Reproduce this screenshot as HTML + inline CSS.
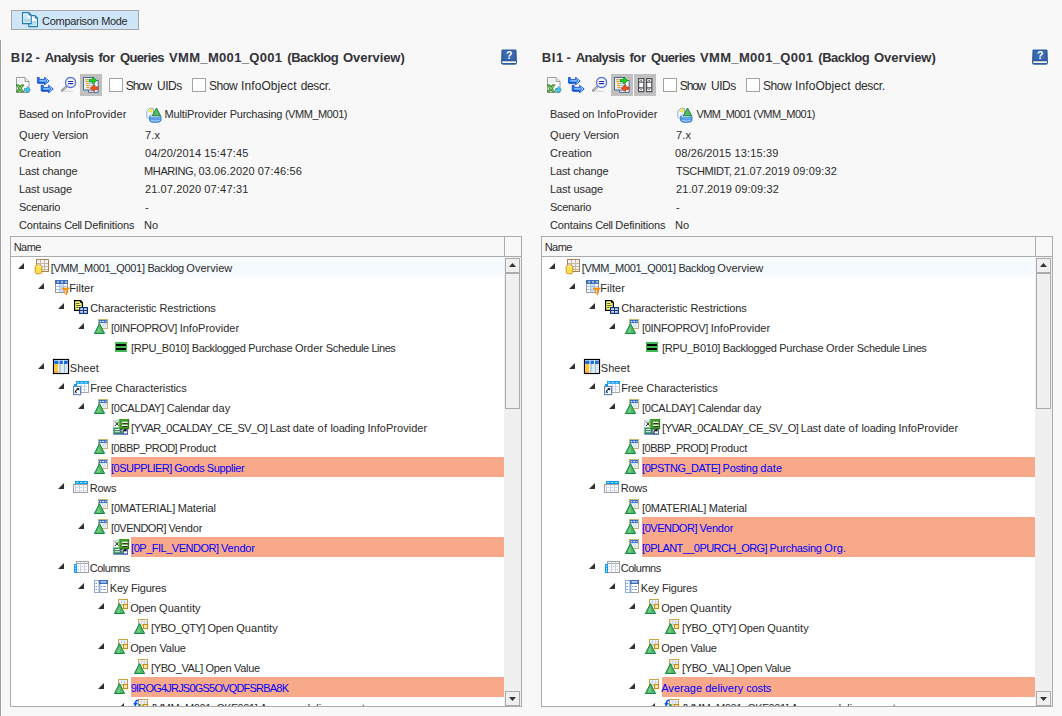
<!DOCTYPE html>
<html><head><meta charset="utf-8"><title>Comparison Mode</title>
<style>
*{box-sizing:border-box;margin:0;padding:0}
html,body{width:1062px;height:716px;overflow:hidden;background:#f8f8f8}
body{position:relative;font-family:"Liberation Sans",sans-serif;font-size:11px;color:#2b2b2b;letter-spacing:-0.27px}
.edge{position:absolute;left:0;top:40px;width:1px;height:676px;background:#a0a0a0;box-shadow:1px 0 0 #fbfbfb}
.cmp{position:absolute;left:11px;top:10px;width:128px;height:20px;background:#cfe6f8;border:1px solid #a6a6a6}
.cmp svg{position:absolute;left:10px;top:1px;width:16px;height:16px}
.cmt{position:absolute;left:31px;top:1px;line-height:19px;white-space:nowrap}
.panel{position:absolute;top:0;width:531px;height:716px}
.title{position:absolute;left:0;top:48px;width:520px;height:20px;font-size:13px;font-weight:700;line-height:20px;white-space:nowrap;color:#333338}
.tw{position:absolute;top:0}
.help{position:absolute;left:501px;top:49px;width:16px;height:16px}
.tic{display:block;width:100%;height:100%}
.tb{position:absolute;top:77px;width:16px;height:16px}
.pbtn{position:absolute;top:74px;width:22px;height:22px;background:#c0c0c0;padding:3px}
.cb{position:absolute;top:78px;width:14px;height:14px;border:1px solid #a3a3a3;background:#fff}
.cbt{position:absolute;top:77px;width:230px;height:18px;font-size:12px;line-height:18px;white-space:nowrap}
.cw{position:absolute;top:0}
.lb,.vl{position:absolute;line-height:14px;white-space:nowrap}
.lb{left:19px}
.vl{left:145px}
.prov{position:absolute;left:146px;top:107px;width:16px;height:16px}
.tree{position:absolute;left:10px;top:236px;width:512px;height:471px;border:1px solid #ababab;background:#fff;overflow:hidden}
.hdr{position:absolute;left:0;top:0;width:510px;height:20px;background:#f8f8f8;border-bottom:1px solid #ababab}
.hn{position:absolute;left:4px;top:0;line-height:20px}
.hsep{position:absolute;left:493px;top:0;width:1px;height:19px;background:#ababab}
.body{position:absolute;left:0;top:20px;width:493px;height:450px;overflow:hidden}
.row{position:absolute;left:0;width:493px;height:20px}
.ar{position:absolute;top:6px;width:0;height:0;border-left:6px solid transparent;border-bottom:6px solid #303030}
.icw{position:absolute;top:2px;width:16px;height:16px}
.ic{display:block;width:16px;height:16px;overflow:visible}
.tx{position:absolute;top:0;right:0;height:20px;line-height:23px;padding-left:1px;white-space:nowrap}
.hl .tx{background:#f8a98a;color:#0000ff}
.foc .tx{background:linear-gradient(#fafdff,#f5fafe 30%,#f5fafe 70%,#fafdff)}
.sb{position:absolute;left:493px;top:20px;width:17px;height:450px;background:#f0f0f0}
.sbu,.sbd,.sbt{position:absolute;left:1px;width:15px;background:#f0f0f0;border:1px solid #ababab}
.sbu{top:1px;height:15px}
.sbd{bottom:1px;height:15px}
.sbt{top:16px;height:136px}
.sbu svg{position:absolute;left:3px;top:4px;width:7px;height:4px}
.sbd svg{position:absolute;left:3px;top:5px;width:7px;height:4px}
</style></head>
<body>
<div class="edge"></div>
<div class="cmp"><svg  viewBox="0 0 16 16"><path d="M6.8 3.6H13L15.4 6V14.6H6.8Z" fill="#fff" stroke="#1d7bb8" stroke-width="1.2" stroke-linejoin="round"/><rect x="8" y="9" width="6" height="4.6" fill="#b6dcea"/><path d="M12.6 4.6L14.6 6.6" stroke="#1d6fa8" stroke-width="1.2"/><path d="M0.6 0.6H6.8L9.2 3V11.6H0.6Z" fill="#fff" stroke="#1d7bb8" stroke-width="1.2" stroke-linejoin="round"/><rect x="1.8" y="2" width="4.2" height="4.6" fill="#cfe8f1"/><rect x="1.8" y="6.6" width="6.2" height="3.8" fill="#b0d9e8"/><path d="M6.4 1.6L8.4 3.6" stroke="#1d6fa8" stroke-width="1.2"/></svg><span class="cmt" id="t0" style="text-indent:-0.90px;"><span style="letter-spacing:-0.305px">Comparison </span><span style="letter-spacing:-0.379px">Mode</span></span></div>
<div class="panel" style="left:0px">
<div class="title"><span class="tw" style="left:10.78px;letter-spacing:0.755px">BI2</span> <span class="tw" style="left:35.49px;letter-spacing:0.000px">-</span> <span class="tw" style="left:44.78px;letter-spacing:-0.602px">Analysis</span> <span class="tw" style="left:98.38px;letter-spacing:-0.355px">for</span> <span class="tw" style="left:119.97px;letter-spacing:-0.641px">Queries</span> <span class="tw" style="left:169.11px;letter-spacing:0.312px">VMM_M001_Q001</span> <span class="tw" style="left:287.35px;letter-spacing:-0.512px">(Backlog</span> <span class="tw" style="left:343.07px;letter-spacing:-0.058px">Overview)</span></div>
<span class="help"><svg class="tic" viewBox="0 0 16 16"><path d="M1.6 0.4H14.4Q15.4 0.4 15.5 1.4L16 13.4Q16 15.8 13.8 15.8H2.2Q0 15.8 0 13.4L0.5 1.4Q0.6 0.4 1.6 0.4Z" fill="#2d5ba3"/><path d="M2.2 1.6H13.8V10.6H2.2Z" fill="#3a69ad"/><rect x="1.2" y="12.3" width="13.8" height="1.7" fill="#fbf6e6"/><text x="8" y="10.3" font-family="Liberation Sans, sans-serif" font-weight="700" font-size="10.5" fill="#fff" text-anchor="middle">?</text></svg></span>
<span class="tb" style="left:15px"><svg class="tic" viewBox="0 0 16 16"><g transform="translate(0.5,0)"><path d="M1 0.5H9.5L13.5 4.5V15.5H1Z" fill="#fdfdfd" stroke="#9a9a9a"/><path d="M9.5 0.5V4.5H13.5" fill="#ececec" stroke="#9a9a9a"/><rect x="2.5" y="2" width="5" height="4" fill="#ededed"/><path d="M0.6 7.8H3.4L8.4 14.8H5.6ZM5.8 7.8H8.6L3.4 14.8H0.6Z" fill="#4aa52e" stroke="#2a7d18" stroke-width="0.7"/><path d="M2.2 8.6L7 14M7 8.6L2.2 14" stroke="#d9f0c8" stroke-width="0.6"/><path d="M9 11.5H11.5V9.6L15 12.8L11.5 16V14.2H9Z" fill="#4cc6e8" stroke="#1f8fc0" stroke-width="0.7"/></g></svg></span>
<span class="tb" style="left:37px;width:17px"><svg class="tic" viewBox="0 0 17 16"><path d="M0.2 0.2H2.2V2.4H7.6V0.2L12.2 4L7.6 7.9V6H0.2Z" fill="#1a78f0" stroke="#0a3cc0" stroke-width="0.7" stroke-linejoin="round"/><path d="M2.4 3.9H8.8M8.6 1.8L10.8 4L8.6 6.2" fill="none" stroke="#c8e8ff" stroke-width="1"/><path d="M1 6.2H7.4" stroke="#0a2fb0" stroke-width="0.8"/><path d="M4.2 8.2H6.2V10.4H11.6V8.2L16.2 12L11.6 15.9V14H4.2Z" fill="#1a78f0" stroke="#0a3cc0" stroke-width="0.7" stroke-linejoin="round"/><path d="M6.4 11.9H12.8M12.6 9.8L14.8 12L12.6 14.2" fill="none" stroke="#c8e8ff" stroke-width="1"/><path d="M5 14.2H11.4" stroke="#0a2fb0" stroke-width="0.8"/></svg></span>
<span class="tb" style="left:61px"><svg class="tic" viewBox="0 0.8 16 16"><ellipse cx="7" cy="15" rx="6" ry="0.8" fill="#dcdcdc"/><path d="M5.6 10.2L1 14.4" stroke="#8a8a8a" stroke-width="2.2" stroke-linecap="round"/><path d="M5.4 10.4L1.2 14.2" stroke="#e2e2e2" stroke-width="0.9" stroke-linecap="round" stroke-dasharray="1 1"/><circle cx="9.6" cy="6.3" r="5" fill="#fff" stroke="#4a6be0" stroke-width="1.3"/><circle cx="9.6" cy="6.3" r="4.1" fill="none" stroke="#c9d6ff" stroke-width="0.7"/><path d="M7 5.3H12.2M7 7.5H12.2" stroke="#1c2fb0" stroke-width="1.2"/></svg></span>
<span class="pbtn" style="left:80px"><svg class="tic" viewBox="0 0 16 16"><path d="M5.5 3.5H15.2V15.3H5.5Z" fill="#eef8ff" stroke="#52678f"/><path d="M0.5 0.5H11V13H0.5Z" fill="#e3f3fd" stroke="#52678f"/><path d="M2.2 2.6H5M2.2 4.6H5M3.2 6.6H6M3.2 8.6H6M3.2 10.6H6" stroke="#f0a51e" stroke-width="1.1"/><path d="M5.2 2.6H7M5.2 4.6H7M6.2 6.6H9M6.2 8.6H13M6.2 10.6H8" stroke="#a9bdd8" stroke-width="1"/><path d="M6.2 2.4H9.6V0.2L13.8 3.6L9.6 7V4.9H6.2Z" fill="#1fd11a" stroke="#0c8a10" stroke-width="0.7" stroke-linejoin="round"/><path d="M14.8 9.9H11.4V7.8L7.2 11.2L11.4 14.6V12.5H14.8Z" fill="#ee4f14" stroke="#c0380a" stroke-width="0.7" stroke-linejoin="round"/></svg></span>

<span class="cb" style="left:109px"></span><span class="cbt" style="left:109px"><span class="cw" style="left:16.86px;letter-spacing:-1.201px">Show</span> <span class="cw" style="left:47.97px;letter-spacing:-0.502px">UIDs</span></span>
<span class="cb" style="left:192px"></span><span class="cbt" style="left:109px"><span class="cw" style="left:100.06px;letter-spacing:-0.501px">Show</span> <span class="cw" style="left:132.09px;letter-spacing:0.078px">InfoObject</span> <span class="cw" style="left:191.70px;letter-spacing:-0.336px">descr.</span></span>
<div class="lb" id="t13" style="top:107px;"><span style="letter-spacing:-0.352px">Based </span><span style="letter-spacing:-0.075px">on </span><span style="letter-spacing:0.080px">InfoProvider</span></div>
<span class="prov"><svg class="tic" viewBox="0 0 16 16"><path d="M0.8 4.2L4 1L7.5 1.6V9L3.6 12L0.8 10.4Z" fill="#f2f7fd" stroke="#86a9d6" stroke-width="0.9"/><path d="M2.4 4.4L4.6 1.6L7.6 2.2L5.4 5.6Z" fill="#f4e64e" stroke="#e6d440" stroke-width="0.4"/><path d="M3.6 9V13.2Q3.6 15.4 9.3 15.4Q15 15.4 15 13.2V9Z" fill="#5a9fe9" stroke="#2f6fc6" stroke-width="0.8"/><ellipse cx="9.3" cy="9" rx="5.7" ry="1.5" fill="#dcecff" stroke="#5d94d8" stroke-width="0.6"/><path d="M5 13.3Q9.3 14.8 13.6 13.3" stroke="#a6d4ff" stroke-width="1" fill="none"/><path d="M10.5 1L14.6 8.8H6.4Z" fill="#58ba62" stroke="#148546" stroke-width="1" stroke-linejoin="round"/></svg></span><div class="vl" id="t14" style="top:107px;left:165px;text-indent:-0.45px;"><span style="letter-spacing:-0.147px">MultiProvider </span><span style="letter-spacing:-0.267px">Purchasing </span><span style="letter-spacing:-0.449px">(VMM_M001)</span></div>
<div class="lb" id="t1" style="top:128px;"><span style="letter-spacing:0.073px">Query </span><span style="letter-spacing:-0.166px">Version</span></div><div class="vl" id="t2" style="top:128px;"><span style="letter-spacing:0.217px">7.x</span></div>
<div class="lb" id="t3" style="top:146px;"><span style="letter-spacing:0.056px">Creation</span></div><div class="vl" id="t4" style="top:146px;"><span style="letter-spacing:0.106px">04/20/2014 </span><span style="letter-spacing:0.173px">15:47:45</span></div>
<div class="lb" id="t5" style="top:164px;"><span style="letter-spacing:-0.125px">Last </span><span style="letter-spacing:-0.136px">change</span></div><div class="vl" id="t6" style="top:164px;text-indent:-0.90px;"><span style="letter-spacing:-0.417px">MHARING, </span><span style="letter-spacing:0.114px">03.06.2020 </span><span style="letter-spacing:0.181px">07:46:56</span></div>
<div class="lb" id="t7" style="top:182px;"><span style="letter-spacing:-0.070px">Last </span><span style="letter-spacing:-0.094px">usage</span></div><div class="vl" id="t8" style="top:182px;"><span style="letter-spacing:0.106px">21.07.2020 </span><span style="letter-spacing:0.173px">07:47:31</span></div>
<div class="lb" id="t9" style="top:200px;"><span style="letter-spacing:-0.302px">Scenario</span></div><div class="vl" id="t10" style="top:200px;"><span style="letter-spacing:0.337px">-</span></div>
<div class="lb" id="t11" style="top:218px;"><span style="letter-spacing:-0.144px">Contains </span><span style="letter-spacing:-0.382px">Cell </span><span style="letter-spacing:-0.104px">Definitions</span></div><div class="vl" id="t12" style="top:218px;text-indent:-0.90px;"><span style="letter-spacing:-0.081px">No</span></div>

<div class="tree">
<div class="hdr"><span class="hn" id="t15" style="text-indent:-1.35px;"><span style="letter-spacing:-0.511px">Name</span></span><i class="hsep"></i></div>
<div class="body">
<div class="row foc" style="top:0px"><i class="ar" style="left:7px"></i><span class="icw" style="left:22px"><svg class="ic" viewBox="0 0 16 16"><g transform="translate(1,0)"><rect x="2.5" y="0.5" width="12" height="12" fill="#eaf3ff" stroke="#b07f4e"/><path d="M3 4.5H14M3 7.5H14M3 10.5H14M6.5 1V12M10.5 1V12" stroke="#c9b59a" stroke-width="1" fill="none"/><path d="M1.2 7.2 Q1.2 6 4.5 6 Q7.8 6 7.8 7.2 V13.6 Q7.8 14.8 4.5 14.8 Q1.2 14.8 1.2 13.6Z" fill="#ffdf4a" stroke="#c48a1c" stroke-width="0.9"/><ellipse cx="4.5" cy="7.3" rx="2.8" ry="0.9" fill="#fff2a0"/></g></svg></span><span class="tx" id="t16" style="left:40px;text-indent:-1.35px;"><span style="letter-spacing:-0.295px">[VMM_M001_Q001] </span><span style="letter-spacing:-0.413px">Backlog </span><span style="letter-spacing:0.005px">Overview</span></span></div>
<div class="row" style="top:20px"><i class="ar" style="left:27px"></i><span class="icw" style="left:42px"><svg class="ic" viewBox="0 0 16 16"><g transform="translate(1,0)"><rect x="1.5" y="1.5" width="12" height="12" fill="#fff" stroke="#9a9a9a"/><rect x="5.5" y="5" width="4" height="8" fill="#cfe0f7"/><path d="M2 7.5H13M2 10.5H13M5.5 5V13M9.5 5V13" stroke="#a9c3ea" fill="none"/><rect x="1" y="1" width="13" height="4" fill="#3d6fb6"/><path d="M3 3H5M7 3H9M11 3H13" stroke="#fff" stroke-width="1.2"/><path d="M8 9H15.5L12.8 12V16L10.7 14.5V12Z" fill="#ff9a1a" stroke="#f08000" stroke-width="0.6"/><path d="M11.5 11V14.5" stroke="#ffe0a8" stroke-width="0.8"/></g></svg></span><span class="tx" id="t17" style="left:60px;text-indent:-2.70px;"><span style="letter-spacing:0.016px">Filter</span></span></div>
<div class="row" style="top:40px"><i class="ar" style="left:47px"></i><span class="icw" style="left:62px"><svg class="ic" viewBox="0 0 16 16"><path d="M1.6 1.6H7.6L9.4 3.4V11.4H1.6Z" fill="#ffff6e" stroke="#000" stroke-width="1.2"/><path d="M7.4 1.4V3.6H9.6" fill="none" stroke="#000" stroke-width="0.9"/><path d="M3.2 4.5H6.4M3.2 6.5H7.6M3.2 8.5H5.6" stroke="#4a4a30" stroke-width="0.9"/><rect x="6" y="8" width="9" height="7" fill="#0b3b7a"/><rect x="7.2" y="9.2" width="2.8" height="1.8" fill="#d8d4ff"/><rect x="11" y="9.2" width="2.8" height="1.8" fill="#d8d4ff"/><rect x="7.2" y="12" width="2.8" height="1.8" fill="#d8d4ff"/><rect x="11" y="12" width="2.8" height="1.8" fill="#d8d4ff"/></svg></span><span class="tx" id="t18" style="left:80px;text-indent:-1.80px;"><span style="letter-spacing:-0.069px">Characteristic </span><span style="letter-spacing:-0.104px">Restrictions</span></span></div>
<div class="row" style="top:60px"><i class="ar" style="left:67px"></i><span class="icw" style="left:82px"><svg class="ic" viewBox="0 0 16 16"><rect x="5.5" y="0.5" width="9" height="9" fill="#fff" stroke="#c9b370"/><rect x="6" y="1" width="8" height="3.2" fill="#3a72d4"/><path d="M7 2.6H8M9.3 2.6H11M12.3 2.6H13.3" stroke="#fff" stroke-width="1"/><rect x="9" y="5" width="4.5" height="3.8" fill="#dfe6f5"/><path d="M6.5 4.6 L11.6 14.5 H1.4Z" fill="#52b561" stroke="#13874a" stroke-width="1" stroke-linejoin="round"/><path d="M6 7.4 L7.4 13.6 H3.8Z" fill="#8ad68e" opacity=".7"/></svg></span><span class="tx" id="t19" style="left:100px;text-indent:-0.90px;"><span style="letter-spacing:-0.350px">[0INFOPROV] </span><span style="letter-spacing:0.019px">InfoProvider</span></span></div>
<div class="row" style="top:80px"><span class="icw" style="left:102px"><svg class="ic" viewBox="0 0 16 16"><rect x="2" y="3" width="12" height="10" fill="#43b955"/><rect x="3" y="5" width="10" height="2" fill="#000"/><rect x="3" y="9" width="10" height="2" fill="#000"/></svg></span><span class="tx" id="t20" style="left:120px;text-indent:-0.90px;"><span style="letter-spacing:-0.327px">[RPU_B010] </span><span style="letter-spacing:-0.358px">Backlogged </span><span style="letter-spacing:-0.317px">Purchase </span><span style="letter-spacing:-0.065px">Order </span><span style="letter-spacing:-0.361px">Schedule </span><span style="letter-spacing:-0.495px">Lines</span></span></div>
<div class="row" style="top:100px"><i class="ar" style="left:27px"></i><span class="icw" style="left:42px"><svg class="ic" viewBox="0 0 16 16"><rect x="0.5" y="0.5" width="15" height="14" fill="#fff" stroke="#000" stroke-width="1.2"/><rect x="1.2" y="1.2" width="13.6" height="1" fill="#7fc0ff"/><rect x="1.2" y="2" width="13.6" height="3" fill="#1b6cd9"/><rect x="1.2" y="5" width="4.3" height="8.8" fill="#f9c93a"/><rect x="1.2" y="12.5" width="4.3" height="1.3" fill="#e89a20"/><rect x="6.5" y="5" width="3.3" height="8.8" fill="#d6e9f8"/><rect x="11" y="5" width="3.6" height="8.8" fill="#d6e9f8"/><path d="M6 1.2V13.8M10.4 1.2V13.8" stroke="#fff" stroke-width="1"/><path d="M6.9 5V13.8M11.2 5V13.8" stroke="#6d8aa6" stroke-width="0.7"/></svg></span><span class="tx" id="t21" style="left:60px;text-indent:-2.25px;"><span style="letter-spacing:0.076px">Sheet</span></span></div>
<div class="row" style="top:120px"><i class="ar" style="left:47px"></i><span class="icw" style="left:62px"><svg class="ic" viewBox="0 0 16 16"><rect x="3.5" y="2.5" width="12" height="11" fill="#fff" stroke="#a8a8a8"/><path d="M8.5 5V13M11.5 5V13" stroke="#c8d4ec"/><path d="M9.5 7.5H10.8M12.4 7.5H13.8M9.5 10.5H10.8M12.4 10.5H13.8" stroke="#b9c9ea"/><rect x="3" y="2" width="13" height="2.8" fill="#0b9cf1"/><path d="M4 3.4H6M7.6 3.4H10M11.6 3.4H14" stroke="#9bd8ff" stroke-width="1"/><rect x="1" y="5" width="3" height="2" fill="#0b9cf1"/><rect x="0.6" y="7.4" width="7" height="8.2" fill="#fff" stroke="#5a7fb5" stroke-width="1.1"/><path d="M2.4 13.6 Q2.2 11.4 5.4 9.8" stroke="#101830" stroke-width="1.1" fill="none"/><path d="M3.4 9H6.2V11.8Z" fill="#101830"/><path d="M2.4 12.6L3.8 13.8" stroke="#101830" stroke-width="0.9"/></svg></span><span class="tx" id="t22" style="left:80px;text-indent:-1.80px;"><span style="letter-spacing:-0.111px">Free </span><span style="letter-spacing:-0.092px">Characteristics</span></span></div>
<div class="row" style="top:140px"><i class="ar" style="left:67px"></i><span class="icw" style="left:82px"><svg class="ic" viewBox="0 0 16 16"><rect x="5.5" y="0.5" width="9" height="9" fill="#fff" stroke="#c9b370"/><rect x="6" y="1" width="8" height="3.2" fill="#3a72d4"/><path d="M7 2.6H8M9.3 2.6H11M12.3 2.6H13.3" stroke="#fff" stroke-width="1"/><rect x="9" y="5" width="4.5" height="3.8" fill="#dfe6f5"/><path d="M6.5 4.6 L11.6 14.5 H1.4Z" fill="#52b561" stroke="#13874a" stroke-width="1" stroke-linejoin="round"/><path d="M6 7.4 L7.4 13.6 H3.8Z" fill="#8ad68e" opacity=".7"/></svg></span><span class="tx" id="t23" style="left:100px;text-indent:-0.90px;"><span style="letter-spacing:-0.291px">[0CALDAY] </span><span style="letter-spacing:-0.231px">Calendar </span><span style="letter-spacing:0.045px">day</span></span></div>
<div class="row" style="top:160px"><span class="icw" style="left:102px"><svg class="ic" viewBox="0 0 16 16"><rect x="0.5" y="1.5" width="14" height="13.5" fill="#fff" stroke="#b9cdf0" stroke-width="0.8"/><path d="M2 2.5L6 7M6 2.5L2 7" stroke="#222" stroke-width="1"/><rect x="0.5" y="8.5" width="7.5" height="6.5" fill="#2a8c52"/><path d="M1.8 10.5H6.8M1.8 12.7H6.8" stroke="#fff" stroke-width="1.1"/><rect x="8.3" y="10.2" width="6.2" height="4.8" fill="#fff" stroke="#3e64b0" stroke-width="0.9"/><path d="M10 15V12.6Q10 11.6 12.6 11.4M11.4 10.6H13V12.4" stroke="#111" stroke-width="1.1" fill="none"/><path d="M0.3 15.2H15" stroke="#3e64b0" stroke-width="0.9"/><rect x="6" y="0" width="10" height="10" fill="#3f9e2a"/><path d="M6 0V10" stroke="#7ec86a" stroke-width="1"/><path d="M15.7 0V10M6 9.7H16" stroke="#2a6a18" stroke-width="0.8"/><path d="M9 3.4H14.5M9 6.4H14.5" stroke="#fff" stroke-width="1.2"/><path d="M9.6 4.5H14.5M9.6 7.5H14.5" stroke="#3a2a10" stroke-width="1"/></svg></span><span class="tx" id="t24" style="left:120px;text-indent:-0.90px;"><span style="letter-spacing:-0.521px">[YVAR_0CALDAY_CE_SV_O] </span><span style="letter-spacing:-0.186px">Last </span><span style="letter-spacing:0.091px">date </span><span style="letter-spacing:0.240px">of </span><span style="letter-spacing:-0.208px">loading </span><span style="letter-spacing:0.041px">InfoProvider</span></span></div>
<div class="row" style="top:180px"><span class="icw" style="left:82px"><svg class="ic" viewBox="0 0 16 16"><rect x="5.5" y="0.5" width="9" height="9" fill="#fff" stroke="#c9b370"/><rect x="6" y="1" width="8" height="3.2" fill="#3a72d4"/><path d="M7 2.6H8M9.3 2.6H11M12.3 2.6H13.3" stroke="#fff" stroke-width="1"/><rect x="9" y="5" width="4.5" height="3.8" fill="#dfe6f5"/><path d="M6.5 4.6 L11.6 14.5 H1.4Z" fill="#52b561" stroke="#13874a" stroke-width="1" stroke-linejoin="round"/><path d="M6 7.4 L7.4 13.6 H3.8Z" fill="#8ad68e" opacity=".7"/></svg></span><span class="tx" id="t25" style="left:100px;text-indent:-0.90px;"><span style="letter-spacing:-0.566px">[0BBP_PROD] </span><span style="letter-spacing:-0.180px">Product</span></span></div>
<div class="row hl" style="top:200px"><span class="icw" style="left:82px"><svg class="ic" viewBox="0 0 16 16"><rect x="5.5" y="0.5" width="9" height="9" fill="#fff" stroke="#c9b370"/><rect x="6" y="1" width="8" height="3.2" fill="#3a72d4"/><path d="M7 2.6H8M9.3 2.6H11M12.3 2.6H13.3" stroke="#fff" stroke-width="1"/><rect x="9" y="5" width="4.5" height="3.8" fill="#dfe6f5"/><path d="M6.5 4.6 L11.6 14.5 H1.4Z" fill="#52b561" stroke="#13874a" stroke-width="1" stroke-linejoin="round"/><path d="M6 7.4 L7.4 13.6 H3.8Z" fill="#8ad68e" opacity=".7"/></svg></span><span class="tx" id="t26" style="left:100px;text-indent:-0.90px;"><span style="letter-spacing:-0.547px">[0SUPPLIER] </span><span style="letter-spacing:-0.483px">Goods </span><span style="letter-spacing:-0.367px">Supplier</span></span></div>
<div class="row" style="top:220px"><i class="ar" style="left:47px"></i><span class="icw" style="left:62px"><svg class="ic" viewBox="0 0 16 16"><rect x="0.5" y="5.5" width="14" height="8" fill="#fff" stroke="#a3a3a3" stroke-width="1.1"/><path d="M2.5 6V13M6.5 6V13M10.5 6V13" stroke="#c3cfea"/><path d="M3.5 8.5H5M7.5 8.5H9M11.5 8.5H13M3.5 11.5H5M7.5 11.5H9M11.5 11.5H13" stroke="#b4c6ec"/><rect x="2" y="2" width="13" height="3" fill="#0b9cf1"/><path d="M3.2 3.5H5.4M7 3.5H9.4M11 3.5H13.4" stroke="#9bd8ff" stroke-width="1"/></svg></span><span class="tx" id="t27" style="left:80px;text-indent:-2.25px;"><span style="letter-spacing:-0.226px">Rows</span></span></div>
<div class="row" style="top:240px"><span class="icw" style="left:82px"><svg class="ic" viewBox="0 0 16 16"><rect x="5.5" y="0.5" width="9" height="9" fill="#fff" stroke="#c9b370"/><rect x="6" y="1" width="8" height="3.2" fill="#3a72d4"/><path d="M7 2.6H8M9.3 2.6H11M12.3 2.6H13.3" stroke="#fff" stroke-width="1"/><rect x="9" y="5" width="4.5" height="3.8" fill="#dfe6f5"/><path d="M6.5 4.6 L11.6 14.5 H1.4Z" fill="#52b561" stroke="#13874a" stroke-width="1" stroke-linejoin="round"/><path d="M6 7.4 L7.4 13.6 H3.8Z" fill="#8ad68e" opacity=".7"/></svg></span><span class="tx" id="t28" style="left:100px;text-indent:-0.90px;"><span style="letter-spacing:-0.230px">[0MATERIAL] </span><span style="letter-spacing:-0.164px">Material</span></span></div>
<div class="row" style="top:260px"><i class="ar" style="left:67px"></i><span class="icw" style="left:82px"><svg class="ic" viewBox="0 0 16 16"><rect x="5.5" y="0.5" width="9" height="9" fill="#fff" stroke="#c9b370"/><rect x="6" y="1" width="8" height="3.2" fill="#3a72d4"/><path d="M7 2.6H8M9.3 2.6H11M12.3 2.6H13.3" stroke="#fff" stroke-width="1"/><rect x="9" y="5" width="4.5" height="3.8" fill="#dfe6f5"/><path d="M6.5 4.6 L11.6 14.5 H1.4Z" fill="#52b561" stroke="#13874a" stroke-width="1" stroke-linejoin="round"/><path d="M6 7.4 L7.4 13.6 H3.8Z" fill="#8ad68e" opacity=".7"/></svg></span><span class="tx" id="t29" style="left:100px;text-indent:-0.90px;"><span style="letter-spacing:-0.495px">[0VENDOR] </span><span style="letter-spacing:-0.204px">Vendor</span></span></div>
<div class="row hl" style="top:280px"><span class="icw" style="left:102px"><svg class="ic" viewBox="0 0 16 16"><rect x="0.5" y="1.5" width="14" height="13.5" fill="#fff" stroke="#b9cdf0" stroke-width="0.8"/><path d="M2 2.5L6 7M6 2.5L2 7" stroke="#222" stroke-width="1"/><rect x="0.5" y="8.5" width="7.5" height="6.5" fill="#2a8c52"/><path d="M1.8 10.5H6.8M1.8 12.7H6.8" stroke="#fff" stroke-width="1.1"/><rect x="8.3" y="10.2" width="6.2" height="4.8" fill="#fff" stroke="#3e64b0" stroke-width="0.9"/><path d="M10 15V12.6Q10 11.6 12.6 11.4M11.4 10.6H13V12.4" stroke="#111" stroke-width="1.1" fill="none"/><path d="M0.3 15.2H15" stroke="#3e64b0" stroke-width="0.9"/><rect x="6" y="0" width="10" height="10" fill="#3f9e2a"/><path d="M6 0V10" stroke="#7ec86a" stroke-width="1"/><path d="M15.7 0V10M6 9.7H16" stroke="#2a6a18" stroke-width="0.8"/><path d="M9 3.4H14.5M9 6.4H14.5" stroke="#fff" stroke-width="1.2"/><path d="M9.6 4.5H14.5M9.6 7.5H14.5" stroke="#3a2a10" stroke-width="1"/></svg></span><span class="tx" id="t30" style="left:120px;text-indent:-0.90px;"><span style="letter-spacing:-0.490px">[0P_FIL_VENDOR] </span><span style="letter-spacing:-0.208px">Vendor</span></span></div>
<div class="row" style="top:300px"><i class="ar" style="left:47px"></i><span class="icw" style="left:62px"><svg class="ic" viewBox="0 0 16 16"><rect x="3.5" y="2.5" width="12" height="11" fill="#fff" stroke="#a3a3a3" stroke-width="1.1"/><path d="M3.5 4.5H15.5" stroke="#a3a3a3"/><path d="M7.5 3V13M11.5 3V13" stroke="#c3cfea"/><path d="M5 7.5H6M8.6 7.5H10M12.6 7.5H14M5 10.5H6M8.6 10.5H10M12.6 10.5H14" stroke="#b4c6ec"/><rect x="1" y="5" width="3" height="9" fill="#0b9cf1"/><path d="M2.5 6.2V7.6M2.5 8.8V10.2M2.5 11.4V12.8" stroke="#c6e9ff" stroke-width="1"/></svg></span><span class="tx" id="t31" style="left:80px;text-indent:-2.25px;"><span style="letter-spacing:-0.486px">Columns</span></span></div>
<div class="row" style="top:320px"><i class="ar" style="left:67px"></i><span class="icw" style="left:82px"><svg class="ic" viewBox="0 0 16 16"><rect x="1.5" y="1.5" width="4.5" height="12" fill="#fff" stroke="#8fabe3"/><path d="M2.5 4.5H4M2.5 7.5H4M2.5 10.5H4" stroke="#6d91dc"/><rect x="6.5" y="1.5" width="8" height="12" fill="#fff" stroke="#a0a0a0"/><path d="M6.7 1.5V13.5" stroke="#88a6e0" stroke-width="1.4"/><rect x="6" y="1" width="9" height="4" fill="#3c69b9"/><path d="M7.6 2.9H13.4" stroke="#dfe9ff" stroke-width="1.3"/><path d="M8 7.5H9.4M10.2 7.5H13M8 10.5H9.4M10.2 10.5H13" stroke="#7d9fe3"/></svg></span><span class="tx" id="t32" style="left:100px;text-indent:-2.25px;"><span style="letter-spacing:-0.208px">Key </span><span style="letter-spacing:-0.195px">Figures</span></span></div>
<div class="row" style="top:340px"><i class="ar" style="left:87px"></i><span class="icw" style="left:102px"><svg class="ic" viewBox="0 0 16 16"><rect x="5.5" y="0.5" width="9" height="5.5" fill="#f4f7ff" stroke="#c9a545"/><path d="M8.5 1V5.5M11.5 1V5.5M6 3H14" stroke="#cdd8f2" stroke-width="1"/><rect x="10.5" y="5.5" width="4" height="4" fill="#fff6c8" stroke="#c98a12" stroke-width="1.2"/><path d="M6.5 4.6 L11.6 14.5 H1.4Z" fill="#52b561" stroke="#13874a" stroke-width="1" stroke-linejoin="round"/><path d="M6 7.4 L7.4 13.6 H3.8Z" fill="#8ad68e" opacity=".7"/></svg></span><span class="tx" id="t33" style="left:120px;text-indent:-1.80px;"><span style="letter-spacing:-0.231px">Open </span><span style="letter-spacing:0.092px">Quantity</span></span></div>
<div class="row" style="top:360px"><span class="icw" style="left:122px"><svg class="ic" viewBox="0 0 16 16"><rect x="5.5" y="0.5" width="9" height="5.5" fill="#f4f7ff" stroke="#c9a545"/><path d="M8.5 1V5.5M11.5 1V5.5M6 3H14" stroke="#cdd8f2" stroke-width="1"/><rect x="10.5" y="5.5" width="4" height="4" fill="#fff6c8" stroke="#c98a12" stroke-width="1.2"/><path d="M6.5 4.6 L11.6 14.5 H1.4Z" fill="#52b561" stroke="#13874a" stroke-width="1" stroke-linejoin="round"/><path d="M6 7.4 L7.4 13.6 H3.8Z" fill="#8ad68e" opacity=".7"/></svg></span><span class="tx" id="t34" style="left:140px;text-indent:-0.90px;"><span style="letter-spacing:-0.474px">[YBO_QTY] </span><span style="letter-spacing:-0.255px">Open </span><span style="letter-spacing:0.068px">Quantity</span></span></div>
<div class="row" style="top:380px"><i class="ar" style="left:87px"></i><span class="icw" style="left:102px"><svg class="ic" viewBox="0 0 16 16"><rect x="5.5" y="0.5" width="9" height="5.5" fill="#f4f7ff" stroke="#c9a545"/><path d="M8.5 1V5.5M11.5 1V5.5M6 3H14" stroke="#cdd8f2" stroke-width="1"/><rect x="10.5" y="5.5" width="4" height="4" fill="#fff6c8" stroke="#c98a12" stroke-width="1.2"/><path d="M6.5 4.6 L11.6 14.5 H1.4Z" fill="#52b561" stroke="#13874a" stroke-width="1" stroke-linejoin="round"/><path d="M6 7.4 L7.4 13.6 H3.8Z" fill="#8ad68e" opacity=".7"/></svg></span><span class="tx" id="t35" style="left:120px;text-indent:-1.80px;"><span style="letter-spacing:-0.143px">Open </span><span style="letter-spacing:-0.213px">Value</span></span></div>
<div class="row" style="top:400px"><span class="icw" style="left:122px"><svg class="ic" viewBox="0 0 16 16"><rect x="5.5" y="0.5" width="9" height="5.5" fill="#f4f7ff" stroke="#c9a545"/><path d="M8.5 1V5.5M11.5 1V5.5M6 3H14" stroke="#cdd8f2" stroke-width="1"/><rect x="10.5" y="5.5" width="4" height="4" fill="#fff6c8" stroke="#c98a12" stroke-width="1.2"/><path d="M6.5 4.6 L11.6 14.5 H1.4Z" fill="#52b561" stroke="#13874a" stroke-width="1" stroke-linejoin="round"/><path d="M6 7.4 L7.4 13.6 H3.8Z" fill="#8ad68e" opacity=".7"/></svg></span><span class="tx" id="t36" style="left:140px;text-indent:-0.90px;"><span style="letter-spacing:-0.420px">[YBO_VAL] </span><span style="letter-spacing:-0.264px">Open </span><span style="letter-spacing:-0.334px">Value</span></span></div>
<div class="row hl" style="top:420px"><i class="ar" style="left:87px"></i><span class="icw" style="left:102px"><svg class="ic" viewBox="0 0 16 16"><rect x="5.5" y="0.5" width="9" height="5.5" fill="#f4f7ff" stroke="#c9a545"/><path d="M8.5 1V5.5M11.5 1V5.5M6 3H14" stroke="#cdd8f2" stroke-width="1"/><rect x="10.5" y="5.5" width="4" height="4" fill="#fff6c8" stroke="#c98a12" stroke-width="1.2"/><path d="M6.5 4.6 L11.6 14.5 H1.4Z" fill="#52b561" stroke="#13874a" stroke-width="1" stroke-linejoin="round"/><path d="M6 7.4 L7.4 13.6 H3.8Z" fill="#8ad68e" opacity=".7"/></svg></span><span class="tx" id="t37" style="left:120px;text-indent:-1.35px;"><span style="letter-spacing:-0.788px">9IROG4JRJS0GS5OVQDFSRBA8K</span></span></div>
<div class="row" style="top:440px"><i class="ar" style="left:107px"></i><span class="icw" style="left:122px"><svg class="ic" viewBox="0 0 16 16"><rect x="5.5" y="0.5" width="9" height="5.5" fill="#f4f7ff" stroke="#c9a545"/><path d="M8.5 1V5.5M11.5 1V5.5M6 3H14" stroke="#cdd8f2" stroke-width="1"/><rect x="10.5" y="5.5" width="4" height="4" fill="#fff6c8" stroke="#c98a12" stroke-width="1.2"/><path d="M6.5 5 L11 15 H2Z" fill="#5cbc6a" stroke="#13874a" stroke-width="1" stroke-linejoin="round"/><path d="M5.4 1.6 Q3 0.8 2.6 3.4 L1.8 9.5 M0.6 4.6 H4.6" stroke="#0a50ff" stroke-width="1.6" fill="none"/></svg></span><span class="tx" id="t38" style="left:140px;"><span style="letter-spacing:-0.385px">[VMM_M001_CKF001] </span><span style="letter-spacing:0.021px">Average </span><span style="letter-spacing:0.004px">delivery </span><span style="letter-spacing:-0.135px">costs</span></span></div>
</div>
<div class="sb"><span class="sbu"><svg viewBox="0 0 7 4"><path d="M0 4L3.5 0L7 4Z" fill="#333"/></svg></span><span class="sbt"></span><span class="sbd"><svg viewBox="0 0 7 4"><path d="M0 0L3.5 4L7 0Z" fill="#333"/></svg></span></div>
</div>
</div>
<div class="panel" style="left:531px">
<div class="title"><span class="tw" style="left:10.78px;letter-spacing:0.676px">BI1</span> <span class="tw" style="left:35.49px;letter-spacing:0.000px">-</span> <span class="tw" style="left:44.78px;letter-spacing:-0.602px">Analysis</span> <span class="tw" style="left:98.38px;letter-spacing:-0.355px">for</span> <span class="tw" style="left:119.97px;letter-spacing:-0.641px">Queries</span> <span class="tw" style="left:169.11px;letter-spacing:0.312px">VMM_M001_Q001</span> <span class="tw" style="left:287.35px;letter-spacing:-0.512px">(Backlog</span> <span class="tw" style="left:343.07px;letter-spacing:-0.058px">Overview)</span></div>
<span class="help"><svg class="tic" viewBox="0 0 16 16"><path d="M1.6 0.4H14.4Q15.4 0.4 15.5 1.4L16 13.4Q16 15.8 13.8 15.8H2.2Q0 15.8 0 13.4L0.5 1.4Q0.6 0.4 1.6 0.4Z" fill="#2d5ba3"/><path d="M2.2 1.6H13.8V10.6H2.2Z" fill="#3a69ad"/><rect x="1.2" y="12.3" width="13.8" height="1.7" fill="#fbf6e6"/><text x="8" y="10.3" font-family="Liberation Sans, sans-serif" font-weight="700" font-size="10.5" fill="#fff" text-anchor="middle">?</text></svg></span>
<span class="tb" style="left:15px"><svg class="tic" viewBox="0 0 16 16"><g transform="translate(0.5,0)"><path d="M1 0.5H9.5L13.5 4.5V15.5H1Z" fill="#fdfdfd" stroke="#9a9a9a"/><path d="M9.5 0.5V4.5H13.5" fill="#ececec" stroke="#9a9a9a"/><rect x="2.5" y="2" width="5" height="4" fill="#ededed"/><path d="M0.6 7.8H3.4L8.4 14.8H5.6ZM5.8 7.8H8.6L3.4 14.8H0.6Z" fill="#4aa52e" stroke="#2a7d18" stroke-width="0.7"/><path d="M2.2 8.6L7 14M7 8.6L2.2 14" stroke="#d9f0c8" stroke-width="0.6"/><path d="M9 11.5H11.5V9.6L15 12.8L11.5 16V14.2H9Z" fill="#4cc6e8" stroke="#1f8fc0" stroke-width="0.7"/></g></svg></span>
<span class="tb" style="left:37px;width:17px"><svg class="tic" viewBox="0 0 17 16"><path d="M0.2 0.2H2.2V2.4H7.6V0.2L12.2 4L7.6 7.9V6H0.2Z" fill="#1a78f0" stroke="#0a3cc0" stroke-width="0.7" stroke-linejoin="round"/><path d="M2.4 3.9H8.8M8.6 1.8L10.8 4L8.6 6.2" fill="none" stroke="#c8e8ff" stroke-width="1"/><path d="M1 6.2H7.4" stroke="#0a2fb0" stroke-width="0.8"/><path d="M4.2 8.2H6.2V10.4H11.6V8.2L16.2 12L11.6 15.9V14H4.2Z" fill="#1a78f0" stroke="#0a3cc0" stroke-width="0.7" stroke-linejoin="round"/><path d="M6.4 11.9H12.8M12.6 9.8L14.8 12L12.6 14.2" fill="none" stroke="#c8e8ff" stroke-width="1"/><path d="M5 14.2H11.4" stroke="#0a2fb0" stroke-width="0.8"/></svg></span>
<span class="tb" style="left:61px"><svg class="tic" viewBox="0 0.8 16 16"><ellipse cx="7" cy="15" rx="6" ry="0.8" fill="#dcdcdc"/><path d="M5.6 10.2L1 14.4" stroke="#8a8a8a" stroke-width="2.2" stroke-linecap="round"/><path d="M5.4 10.4L1.2 14.2" stroke="#e2e2e2" stroke-width="0.9" stroke-linecap="round" stroke-dasharray="1 1"/><circle cx="9.6" cy="6.3" r="5" fill="#fff" stroke="#4a6be0" stroke-width="1.3"/><circle cx="9.6" cy="6.3" r="4.1" fill="none" stroke="#c9d6ff" stroke-width="0.7"/><path d="M7 5.3H12.2M7 7.5H12.2" stroke="#1c2fb0" stroke-width="1.2"/></svg></span>
<span class="pbtn" style="left:80px"><svg class="tic" viewBox="0 0 16 16"><path d="M5.5 3.5H15.2V15.3H5.5Z" fill="#eef8ff" stroke="#52678f"/><path d="M0.5 0.5H11V13H0.5Z" fill="#e3f3fd" stroke="#52678f"/><path d="M2.2 2.6H5M2.2 4.6H5M3.2 6.6H6M3.2 8.6H6M3.2 10.6H6" stroke="#f0a51e" stroke-width="1.1"/><path d="M5.2 2.6H7M5.2 4.6H7M6.2 6.6H9M6.2 8.6H13M6.2 10.6H8" stroke="#a9bdd8" stroke-width="1"/><path d="M6.2 2.4H9.6V0.2L13.8 3.6L9.6 7V4.9H6.2Z" fill="#1fd11a" stroke="#0c8a10" stroke-width="0.7" stroke-linejoin="round"/><path d="M14.8 9.9H11.4V7.8L7.2 11.2L11.4 14.6V12.5H14.8Z" fill="#ee4f14" stroke="#c0380a" stroke-width="0.7" stroke-linejoin="round"/></svg></span>
<span class="pbtn" style="left:103px"><svg class="tic" viewBox="0 0 16 16"><rect x="1.6" y="1.6" width="5.2" height="13" fill="#fff" stroke="#4e4e56" stroke-width="1.2"/><path d="M1.6 5.2H6.8M1.6 10.8H6.8" stroke="#4e4e56" stroke-width="1.2"/><path d="M3.4 3.4H5M3.4 12.7H5" stroke="#5a5a60" stroke-width="1"/><rect x="9.6" y="1.6" width="5.2" height="13" fill="#fff" stroke="#4e4e56" stroke-width="1.2"/><path d="M9.6 5.2H14.8M9.6 10.8H14.8" stroke="#4e4e56" stroke-width="1.2"/><path d="M11.4 3.4H13M11.4 12.7H13" stroke="#5a5a60" stroke-width="1"/></svg></span>
<span class="cb" style="left:132px"></span><span class="cbt" style="left:132px"><span class="cw" style="left:16.86px;letter-spacing:-1.201px">Show</span> <span class="cw" style="left:47.97px;letter-spacing:-0.502px">UIDs</span></span>
<span class="cb" style="left:215px"></span><span class="cbt" style="left:132px"><span class="cw" style="left:100.06px;letter-spacing:-0.501px">Show</span> <span class="cw" style="left:132.09px;letter-spacing:0.078px">InfoObject</span> <span class="cw" style="left:191.70px;letter-spacing:-0.336px">descr.</span></span>
<div class="lb" id="t51" style="top:107px;"><span style="letter-spacing:-0.352px">Based </span><span style="letter-spacing:-0.075px">on </span><span style="letter-spacing:0.080px">InfoProvider</span></div>
<span class="prov"><svg class="tic" viewBox="0 0 16 16"><path d="M0.8 4.2L4 1L7.5 1.6V9L3.6 12L0.8 10.4Z" fill="#f2f7fd" stroke="#86a9d6" stroke-width="0.9"/><path d="M2.4 4.4L4.6 1.6L7.6 2.2L5.4 5.6Z" fill="#f4e64e" stroke="#e6d440" stroke-width="0.4"/><path d="M3.6 9V13.2Q3.6 15.4 9.3 15.4Q15 15.4 15 13.2V9Z" fill="#5a9fe9" stroke="#2f6fc6" stroke-width="0.8"/><ellipse cx="9.3" cy="9" rx="5.7" ry="1.5" fill="#dcecff" stroke="#5d94d8" stroke-width="0.6"/><path d="M5 13.3Q9.3 14.8 13.6 13.3" stroke="#a6d4ff" stroke-width="1" fill="none"/><path d="M10.5 1L14.6 8.8H6.4Z" fill="#58ba62" stroke="#148546" stroke-width="1" stroke-linejoin="round"/></svg></span><div class="vl" id="t52" style="top:107px;left:165px;text-indent:0.45px;"><span style="letter-spacing:-0.620px">VMM_M001 </span><span style="letter-spacing:-0.487px">(VMM_M001)</span></div>
<div class="lb" id="t39" style="top:128px;"><span style="letter-spacing:0.073px">Query </span><span style="letter-spacing:-0.166px">Version</span></div><div class="vl" id="t40" style="top:128px;"><span style="letter-spacing:0.217px">7.x</span></div>
<div class="lb" id="t41" style="top:146px;"><span style="letter-spacing:0.056px">Creation</span></div><div class="vl" id="t42" style="top:146px;text-indent:-0.90px;"><span style="letter-spacing:0.106px">08/26/2015 </span><span style="letter-spacing:0.173px">13:15:39</span></div>
<div class="lb" id="t43" style="top:164px;"><span style="letter-spacing:-0.125px">Last </span><span style="letter-spacing:-0.136px">change</span></div><div class="vl" id="t44" style="top:164px;"><span style="letter-spacing:-0.372px">TSCHMIDT, </span><span style="letter-spacing:0.081px">21.07.2019 </span><span style="letter-spacing:0.148px">09:09:32</span></div>
<div class="lb" id="t45" style="top:182px;"><span style="letter-spacing:-0.070px">Last </span><span style="letter-spacing:-0.094px">usage</span></div><div class="vl" id="t46" style="top:182px;"><span style="letter-spacing:0.081px">21.07.2019 </span><span style="letter-spacing:0.148px">09:09:32</span></div>
<div class="lb" id="t47" style="top:200px;"><span style="letter-spacing:-0.302px">Scenario</span></div><div class="vl" id="t48" style="top:200px;"><span style="letter-spacing:0.337px">-</span></div>
<div class="lb" id="t49" style="top:218px;"><span style="letter-spacing:-0.144px">Contains </span><span style="letter-spacing:-0.382px">Cell </span><span style="letter-spacing:-0.104px">Definitions</span></div><div class="vl" id="t50" style="top:218px;text-indent:-0.90px;"><span style="letter-spacing:-0.081px">No</span></div>

<div class="tree">
<div class="hdr"><span class="hn" id="t53" style="text-indent:-1.35px;"><span style="letter-spacing:-0.511px">Name</span></span><i class="hsep"></i></div>
<div class="body">
<div class="row foc" style="top:0px"><i class="ar" style="left:7px"></i><span class="icw" style="left:22px"><svg class="ic" viewBox="0 0 16 16"><g transform="translate(1,0)"><rect x="2.5" y="0.5" width="12" height="12" fill="#eaf3ff" stroke="#b07f4e"/><path d="M3 4.5H14M3 7.5H14M3 10.5H14M6.5 1V12M10.5 1V12" stroke="#c9b59a" stroke-width="1" fill="none"/><path d="M1.2 7.2 Q1.2 6 4.5 6 Q7.8 6 7.8 7.2 V13.6 Q7.8 14.8 4.5 14.8 Q1.2 14.8 1.2 13.6Z" fill="#ffdf4a" stroke="#c48a1c" stroke-width="0.9"/><ellipse cx="4.5" cy="7.3" rx="2.8" ry="0.9" fill="#fff2a0"/></g></svg></span><span class="tx" id="t54" style="left:40px;text-indent:-1.35px;"><span style="letter-spacing:-0.295px">[VMM_M001_Q001] </span><span style="letter-spacing:-0.413px">Backlog </span><span style="letter-spacing:0.005px">Overview</span></span></div>
<div class="row" style="top:20px"><i class="ar" style="left:27px"></i><span class="icw" style="left:42px"><svg class="ic" viewBox="0 0 16 16"><g transform="translate(1,0)"><rect x="1.5" y="1.5" width="12" height="12" fill="#fff" stroke="#9a9a9a"/><rect x="5.5" y="5" width="4" height="8" fill="#cfe0f7"/><path d="M2 7.5H13M2 10.5H13M5.5 5V13M9.5 5V13" stroke="#a9c3ea" fill="none"/><rect x="1" y="1" width="13" height="4" fill="#3d6fb6"/><path d="M3 3H5M7 3H9M11 3H13" stroke="#fff" stroke-width="1.2"/><path d="M8 9H15.5L12.8 12V16L10.7 14.5V12Z" fill="#ff9a1a" stroke="#f08000" stroke-width="0.6"/><path d="M11.5 11V14.5" stroke="#ffe0a8" stroke-width="0.8"/></g></svg></span><span class="tx" id="t55" style="left:60px;text-indent:-2.70px;"><span style="letter-spacing:0.016px">Filter</span></span></div>
<div class="row" style="top:40px"><i class="ar" style="left:47px"></i><span class="icw" style="left:62px"><svg class="ic" viewBox="0 0 16 16"><path d="M1.6 1.6H7.6L9.4 3.4V11.4H1.6Z" fill="#ffff6e" stroke="#000" stroke-width="1.2"/><path d="M7.4 1.4V3.6H9.6" fill="none" stroke="#000" stroke-width="0.9"/><path d="M3.2 4.5H6.4M3.2 6.5H7.6M3.2 8.5H5.6" stroke="#4a4a30" stroke-width="0.9"/><rect x="6" y="8" width="9" height="7" fill="#0b3b7a"/><rect x="7.2" y="9.2" width="2.8" height="1.8" fill="#d8d4ff"/><rect x="11" y="9.2" width="2.8" height="1.8" fill="#d8d4ff"/><rect x="7.2" y="12" width="2.8" height="1.8" fill="#d8d4ff"/><rect x="11" y="12" width="2.8" height="1.8" fill="#d8d4ff"/></svg></span><span class="tx" id="t56" style="left:80px;text-indent:-1.80px;"><span style="letter-spacing:-0.069px">Characteristic </span><span style="letter-spacing:-0.104px">Restrictions</span></span></div>
<div class="row" style="top:60px"><i class="ar" style="left:67px"></i><span class="icw" style="left:82px"><svg class="ic" viewBox="0 0 16 16"><rect x="5.5" y="0.5" width="9" height="9" fill="#fff" stroke="#c9b370"/><rect x="6" y="1" width="8" height="3.2" fill="#3a72d4"/><path d="M7 2.6H8M9.3 2.6H11M12.3 2.6H13.3" stroke="#fff" stroke-width="1"/><rect x="9" y="5" width="4.5" height="3.8" fill="#dfe6f5"/><path d="M6.5 4.6 L11.6 14.5 H1.4Z" fill="#52b561" stroke="#13874a" stroke-width="1" stroke-linejoin="round"/><path d="M6 7.4 L7.4 13.6 H3.8Z" fill="#8ad68e" opacity=".7"/></svg></span><span class="tx" id="t57" style="left:100px;text-indent:-0.90px;"><span style="letter-spacing:-0.350px">[0INFOPROV] </span><span style="letter-spacing:0.019px">InfoProvider</span></span></div>
<div class="row" style="top:80px"><span class="icw" style="left:102px"><svg class="ic" viewBox="0 0 16 16"><rect x="2" y="3" width="12" height="10" fill="#43b955"/><rect x="3" y="5" width="10" height="2" fill="#000"/><rect x="3" y="9" width="10" height="2" fill="#000"/></svg></span><span class="tx" id="t58" style="left:120px;text-indent:-0.90px;"><span style="letter-spacing:-0.327px">[RPU_B010] </span><span style="letter-spacing:-0.358px">Backlogged </span><span style="letter-spacing:-0.317px">Purchase </span><span style="letter-spacing:-0.065px">Order </span><span style="letter-spacing:-0.361px">Schedule </span><span style="letter-spacing:-0.495px">Lines</span></span></div>
<div class="row" style="top:100px"><i class="ar" style="left:27px"></i><span class="icw" style="left:42px"><svg class="ic" viewBox="0 0 16 16"><rect x="0.5" y="0.5" width="15" height="14" fill="#fff" stroke="#000" stroke-width="1.2"/><rect x="1.2" y="1.2" width="13.6" height="1" fill="#7fc0ff"/><rect x="1.2" y="2" width="13.6" height="3" fill="#1b6cd9"/><rect x="1.2" y="5" width="4.3" height="8.8" fill="#f9c93a"/><rect x="1.2" y="12.5" width="4.3" height="1.3" fill="#e89a20"/><rect x="6.5" y="5" width="3.3" height="8.8" fill="#d6e9f8"/><rect x="11" y="5" width="3.6" height="8.8" fill="#d6e9f8"/><path d="M6 1.2V13.8M10.4 1.2V13.8" stroke="#fff" stroke-width="1"/><path d="M6.9 5V13.8M11.2 5V13.8" stroke="#6d8aa6" stroke-width="0.7"/></svg></span><span class="tx" id="t59" style="left:60px;text-indent:-2.25px;"><span style="letter-spacing:0.076px">Sheet</span></span></div>
<div class="row" style="top:120px"><i class="ar" style="left:47px"></i><span class="icw" style="left:62px"><svg class="ic" viewBox="0 0 16 16"><rect x="3.5" y="2.5" width="12" height="11" fill="#fff" stroke="#a8a8a8"/><path d="M8.5 5V13M11.5 5V13" stroke="#c8d4ec"/><path d="M9.5 7.5H10.8M12.4 7.5H13.8M9.5 10.5H10.8M12.4 10.5H13.8" stroke="#b9c9ea"/><rect x="3" y="2" width="13" height="2.8" fill="#0b9cf1"/><path d="M4 3.4H6M7.6 3.4H10M11.6 3.4H14" stroke="#9bd8ff" stroke-width="1"/><rect x="1" y="5" width="3" height="2" fill="#0b9cf1"/><rect x="0.6" y="7.4" width="7" height="8.2" fill="#fff" stroke="#5a7fb5" stroke-width="1.1"/><path d="M2.4 13.6 Q2.2 11.4 5.4 9.8" stroke="#101830" stroke-width="1.1" fill="none"/><path d="M3.4 9H6.2V11.8Z" fill="#101830"/><path d="M2.4 12.6L3.8 13.8" stroke="#101830" stroke-width="0.9"/></svg></span><span class="tx" id="t60" style="left:80px;text-indent:-1.80px;"><span style="letter-spacing:-0.111px">Free </span><span style="letter-spacing:-0.092px">Characteristics</span></span></div>
<div class="row" style="top:140px"><i class="ar" style="left:67px"></i><span class="icw" style="left:82px"><svg class="ic" viewBox="0 0 16 16"><rect x="5.5" y="0.5" width="9" height="9" fill="#fff" stroke="#c9b370"/><rect x="6" y="1" width="8" height="3.2" fill="#3a72d4"/><path d="M7 2.6H8M9.3 2.6H11M12.3 2.6H13.3" stroke="#fff" stroke-width="1"/><rect x="9" y="5" width="4.5" height="3.8" fill="#dfe6f5"/><path d="M6.5 4.6 L11.6 14.5 H1.4Z" fill="#52b561" stroke="#13874a" stroke-width="1" stroke-linejoin="round"/><path d="M6 7.4 L7.4 13.6 H3.8Z" fill="#8ad68e" opacity=".7"/></svg></span><span class="tx" id="t61" style="left:100px;text-indent:-0.90px;"><span style="letter-spacing:-0.291px">[0CALDAY] </span><span style="letter-spacing:-0.231px">Calendar </span><span style="letter-spacing:0.045px">day</span></span></div>
<div class="row" style="top:160px"><span class="icw" style="left:102px"><svg class="ic" viewBox="0 0 16 16"><rect x="0.5" y="1.5" width="14" height="13.5" fill="#fff" stroke="#b9cdf0" stroke-width="0.8"/><path d="M2 2.5L6 7M6 2.5L2 7" stroke="#222" stroke-width="1"/><rect x="0.5" y="8.5" width="7.5" height="6.5" fill="#2a8c52"/><path d="M1.8 10.5H6.8M1.8 12.7H6.8" stroke="#fff" stroke-width="1.1"/><rect x="8.3" y="10.2" width="6.2" height="4.8" fill="#fff" stroke="#3e64b0" stroke-width="0.9"/><path d="M10 15V12.6Q10 11.6 12.6 11.4M11.4 10.6H13V12.4" stroke="#111" stroke-width="1.1" fill="none"/><path d="M0.3 15.2H15" stroke="#3e64b0" stroke-width="0.9"/><rect x="6" y="0" width="10" height="10" fill="#3f9e2a"/><path d="M6 0V10" stroke="#7ec86a" stroke-width="1"/><path d="M15.7 0V10M6 9.7H16" stroke="#2a6a18" stroke-width="0.8"/><path d="M9 3.4H14.5M9 6.4H14.5" stroke="#fff" stroke-width="1.2"/><path d="M9.6 4.5H14.5M9.6 7.5H14.5" stroke="#3a2a10" stroke-width="1"/></svg></span><span class="tx" id="t62" style="left:120px;text-indent:-0.90px;"><span style="letter-spacing:-0.521px">[YVAR_0CALDAY_CE_SV_O] </span><span style="letter-spacing:-0.186px">Last </span><span style="letter-spacing:0.091px">date </span><span style="letter-spacing:0.240px">of </span><span style="letter-spacing:-0.208px">loading </span><span style="letter-spacing:0.041px">InfoProvider</span></span></div>
<div class="row" style="top:180px"><span class="icw" style="left:82px"><svg class="ic" viewBox="0 0 16 16"><rect x="5.5" y="0.5" width="9" height="9" fill="#fff" stroke="#c9b370"/><rect x="6" y="1" width="8" height="3.2" fill="#3a72d4"/><path d="M7 2.6H8M9.3 2.6H11M12.3 2.6H13.3" stroke="#fff" stroke-width="1"/><rect x="9" y="5" width="4.5" height="3.8" fill="#dfe6f5"/><path d="M6.5 4.6 L11.6 14.5 H1.4Z" fill="#52b561" stroke="#13874a" stroke-width="1" stroke-linejoin="round"/><path d="M6 7.4 L7.4 13.6 H3.8Z" fill="#8ad68e" opacity=".7"/></svg></span><span class="tx" id="t63" style="left:100px;text-indent:-0.90px;"><span style="letter-spacing:-0.566px">[0BBP_PROD] </span><span style="letter-spacing:-0.180px">Product</span></span></div>
<div class="row hl" style="top:200px"><span class="icw" style="left:82px"><svg class="ic" viewBox="0 0 16 16"><rect x="5.5" y="0.5" width="9" height="9" fill="#fff" stroke="#c9b370"/><rect x="6" y="1" width="8" height="3.2" fill="#3a72d4"/><path d="M7 2.6H8M9.3 2.6H11M12.3 2.6H13.3" stroke="#fff" stroke-width="1"/><rect x="9" y="5" width="4.5" height="3.8" fill="#dfe6f5"/><path d="M6.5 4.6 L11.6 14.5 H1.4Z" fill="#52b561" stroke="#13874a" stroke-width="1" stroke-linejoin="round"/><path d="M6 7.4 L7.4 13.6 H3.8Z" fill="#8ad68e" opacity=".7"/></svg></span><span class="tx" id="t64" style="left:100px;text-indent:-0.90px;"><span style="letter-spacing:-0.523px">[0PSTNG_DATE] </span><span style="letter-spacing:-0.254px">Posting </span><span style="letter-spacing:0.112px">date</span></span></div>
<div class="row" style="top:220px"><i class="ar" style="left:47px"></i><span class="icw" style="left:62px"><svg class="ic" viewBox="0 0 16 16"><rect x="0.5" y="5.5" width="14" height="8" fill="#fff" stroke="#a3a3a3" stroke-width="1.1"/><path d="M2.5 6V13M6.5 6V13M10.5 6V13" stroke="#c3cfea"/><path d="M3.5 8.5H5M7.5 8.5H9M11.5 8.5H13M3.5 11.5H5M7.5 11.5H9M11.5 11.5H13" stroke="#b4c6ec"/><rect x="2" y="2" width="13" height="3" fill="#0b9cf1"/><path d="M3.2 3.5H5.4M7 3.5H9.4M11 3.5H13.4" stroke="#9bd8ff" stroke-width="1"/></svg></span><span class="tx" id="t65" style="left:80px;text-indent:-2.25px;"><span style="letter-spacing:-0.226px">Rows</span></span></div>
<div class="row" style="top:240px"><span class="icw" style="left:82px"><svg class="ic" viewBox="0 0 16 16"><rect x="5.5" y="0.5" width="9" height="9" fill="#fff" stroke="#c9b370"/><rect x="6" y="1" width="8" height="3.2" fill="#3a72d4"/><path d="M7 2.6H8M9.3 2.6H11M12.3 2.6H13.3" stroke="#fff" stroke-width="1"/><rect x="9" y="5" width="4.5" height="3.8" fill="#dfe6f5"/><path d="M6.5 4.6 L11.6 14.5 H1.4Z" fill="#52b561" stroke="#13874a" stroke-width="1" stroke-linejoin="round"/><path d="M6 7.4 L7.4 13.6 H3.8Z" fill="#8ad68e" opacity=".7"/></svg></span><span class="tx" id="t66" style="left:100px;text-indent:-0.90px;"><span style="letter-spacing:-0.230px">[0MATERIAL] </span><span style="letter-spacing:-0.164px">Material</span></span></div>
<div class="row hl" style="top:260px"><span class="icw" style="left:82px"><svg class="ic" viewBox="0 0 16 16"><rect x="5.5" y="0.5" width="9" height="9" fill="#fff" stroke="#c9b370"/><rect x="6" y="1" width="8" height="3.2" fill="#3a72d4"/><path d="M7 2.6H8M9.3 2.6H11M12.3 2.6H13.3" stroke="#fff" stroke-width="1"/><rect x="9" y="5" width="4.5" height="3.8" fill="#dfe6f5"/><path d="M6.5 4.6 L11.6 14.5 H1.4Z" fill="#52b561" stroke="#13874a" stroke-width="1" stroke-linejoin="round"/><path d="M6 7.4 L7.4 13.6 H3.8Z" fill="#8ad68e" opacity=".7"/></svg></span><span class="tx" id="t67" style="left:100px;text-indent:-0.90px;"><span style="letter-spacing:-0.495px">[0VENDOR] </span><span style="letter-spacing:-0.204px">Vendor</span></span></div>
<div class="row hl" style="top:280px"><span class="icw" style="left:82px"><svg class="ic" viewBox="0 0 16 16"><rect x="5.5" y="0.5" width="9" height="9" fill="#fff" stroke="#c9b370"/><rect x="6" y="1" width="8" height="3.2" fill="#3a72d4"/><path d="M7 2.6H8M9.3 2.6H11M12.3 2.6H13.3" stroke="#fff" stroke-width="1"/><rect x="9" y="5" width="4.5" height="3.8" fill="#dfe6f5"/><path d="M6.5 4.6 L11.6 14.5 H1.4Z" fill="#52b561" stroke="#13874a" stroke-width="1" stroke-linejoin="round"/><path d="M6 7.4 L7.4 13.6 H3.8Z" fill="#8ad68e" opacity=".7"/></svg></span><span class="tx" id="t68" style="left:100px;text-indent:-0.90px;"><span style="letter-spacing:-0.567px">[0PLANT__0PURCH_ORG] </span><span style="letter-spacing:-0.306px">Purchasing </span><span style="letter-spacing:0.126px">Org.</span></span></div>
<div class="row" style="top:300px"><i class="ar" style="left:47px"></i><span class="icw" style="left:62px"><svg class="ic" viewBox="0 0 16 16"><rect x="3.5" y="2.5" width="12" height="11" fill="#fff" stroke="#a3a3a3" stroke-width="1.1"/><path d="M3.5 4.5H15.5" stroke="#a3a3a3"/><path d="M7.5 3V13M11.5 3V13" stroke="#c3cfea"/><path d="M5 7.5H6M8.6 7.5H10M12.6 7.5H14M5 10.5H6M8.6 10.5H10M12.6 10.5H14" stroke="#b4c6ec"/><rect x="1" y="5" width="3" height="9" fill="#0b9cf1"/><path d="M2.5 6.2V7.6M2.5 8.8V10.2M2.5 11.4V12.8" stroke="#c6e9ff" stroke-width="1"/></svg></span><span class="tx" id="t69" style="left:80px;text-indent:-2.25px;"><span style="letter-spacing:-0.486px">Columns</span></span></div>
<div class="row" style="top:320px"><i class="ar" style="left:67px"></i><span class="icw" style="left:82px"><svg class="ic" viewBox="0 0 16 16"><rect x="1.5" y="1.5" width="4.5" height="12" fill="#fff" stroke="#8fabe3"/><path d="M2.5 4.5H4M2.5 7.5H4M2.5 10.5H4" stroke="#6d91dc"/><rect x="6.5" y="1.5" width="8" height="12" fill="#fff" stroke="#a0a0a0"/><path d="M6.7 1.5V13.5" stroke="#88a6e0" stroke-width="1.4"/><rect x="6" y="1" width="9" height="4" fill="#3c69b9"/><path d="M7.6 2.9H13.4" stroke="#dfe9ff" stroke-width="1.3"/><path d="M8 7.5H9.4M10.2 7.5H13M8 10.5H9.4M10.2 10.5H13" stroke="#7d9fe3"/></svg></span><span class="tx" id="t70" style="left:100px;text-indent:-2.25px;"><span style="letter-spacing:-0.208px">Key </span><span style="letter-spacing:-0.195px">Figures</span></span></div>
<div class="row" style="top:340px"><i class="ar" style="left:87px"></i><span class="icw" style="left:102px"><svg class="ic" viewBox="0 0 16 16"><rect x="5.5" y="0.5" width="9" height="5.5" fill="#f4f7ff" stroke="#c9a545"/><path d="M8.5 1V5.5M11.5 1V5.5M6 3H14" stroke="#cdd8f2" stroke-width="1"/><rect x="10.5" y="5.5" width="4" height="4" fill="#fff6c8" stroke="#c98a12" stroke-width="1.2"/><path d="M6.5 4.6 L11.6 14.5 H1.4Z" fill="#52b561" stroke="#13874a" stroke-width="1" stroke-linejoin="round"/><path d="M6 7.4 L7.4 13.6 H3.8Z" fill="#8ad68e" opacity=".7"/></svg></span><span class="tx" id="t71" style="left:120px;text-indent:-1.80px;"><span style="letter-spacing:-0.231px">Open </span><span style="letter-spacing:0.092px">Quantity</span></span></div>
<div class="row" style="top:360px"><span class="icw" style="left:122px"><svg class="ic" viewBox="0 0 16 16"><rect x="5.5" y="0.5" width="9" height="5.5" fill="#f4f7ff" stroke="#c9a545"/><path d="M8.5 1V5.5M11.5 1V5.5M6 3H14" stroke="#cdd8f2" stroke-width="1"/><rect x="10.5" y="5.5" width="4" height="4" fill="#fff6c8" stroke="#c98a12" stroke-width="1.2"/><path d="M6.5 4.6 L11.6 14.5 H1.4Z" fill="#52b561" stroke="#13874a" stroke-width="1" stroke-linejoin="round"/><path d="M6 7.4 L7.4 13.6 H3.8Z" fill="#8ad68e" opacity=".7"/></svg></span><span class="tx" id="t72" style="left:140px;text-indent:-0.90px;"><span style="letter-spacing:-0.474px">[YBO_QTY] </span><span style="letter-spacing:-0.255px">Open </span><span style="letter-spacing:0.068px">Quantity</span></span></div>
<div class="row" style="top:380px"><i class="ar" style="left:87px"></i><span class="icw" style="left:102px"><svg class="ic" viewBox="0 0 16 16"><rect x="5.5" y="0.5" width="9" height="5.5" fill="#f4f7ff" stroke="#c9a545"/><path d="M8.5 1V5.5M11.5 1V5.5M6 3H14" stroke="#cdd8f2" stroke-width="1"/><rect x="10.5" y="5.5" width="4" height="4" fill="#fff6c8" stroke="#c98a12" stroke-width="1.2"/><path d="M6.5 4.6 L11.6 14.5 H1.4Z" fill="#52b561" stroke="#13874a" stroke-width="1" stroke-linejoin="round"/><path d="M6 7.4 L7.4 13.6 H3.8Z" fill="#8ad68e" opacity=".7"/></svg></span><span class="tx" id="t73" style="left:120px;text-indent:-1.80px;"><span style="letter-spacing:-0.143px">Open </span><span style="letter-spacing:-0.213px">Value</span></span></div>
<div class="row" style="top:400px"><span class="icw" style="left:122px"><svg class="ic" viewBox="0 0 16 16"><rect x="5.5" y="0.5" width="9" height="5.5" fill="#f4f7ff" stroke="#c9a545"/><path d="M8.5 1V5.5M11.5 1V5.5M6 3H14" stroke="#cdd8f2" stroke-width="1"/><rect x="10.5" y="5.5" width="4" height="4" fill="#fff6c8" stroke="#c98a12" stroke-width="1.2"/><path d="M6.5 4.6 L11.6 14.5 H1.4Z" fill="#52b561" stroke="#13874a" stroke-width="1" stroke-linejoin="round"/><path d="M6 7.4 L7.4 13.6 H3.8Z" fill="#8ad68e" opacity=".7"/></svg></span><span class="tx" id="t74" style="left:140px;text-indent:-0.90px;"><span style="letter-spacing:-0.420px">[YBO_VAL] </span><span style="letter-spacing:-0.264px">Open </span><span style="letter-spacing:-0.334px">Value</span></span></div>
<div class="row hl" style="top:420px"><i class="ar" style="left:87px"></i><span class="icw" style="left:102px"><svg class="ic" viewBox="0 0 16 16"><rect x="5.5" y="0.5" width="9" height="5.5" fill="#f4f7ff" stroke="#c9a545"/><path d="M8.5 1V5.5M11.5 1V5.5M6 3H14" stroke="#cdd8f2" stroke-width="1"/><rect x="10.5" y="5.5" width="4" height="4" fill="#fff6c8" stroke="#c98a12" stroke-width="1.2"/><path d="M6.5 4.6 L11.6 14.5 H1.4Z" fill="#52b561" stroke="#13874a" stroke-width="1" stroke-linejoin="round"/><path d="M6 7.4 L7.4 13.6 H3.8Z" fill="#8ad68e" opacity=".7"/></svg></span><span class="tx" id="t75" style="left:120px;text-indent:-1.80px;"><span style="letter-spacing:0.022px">Average </span><span style="letter-spacing:0.005px">delivery </span><span style="letter-spacing:-0.135px">costs</span></span></div>
<div class="row" style="top:440px"><i class="ar" style="left:107px"></i><span class="icw" style="left:122px"><svg class="ic" viewBox="0 0 16 16"><rect x="5.5" y="0.5" width="9" height="5.5" fill="#f4f7ff" stroke="#c9a545"/><path d="M8.5 1V5.5M11.5 1V5.5M6 3H14" stroke="#cdd8f2" stroke-width="1"/><rect x="10.5" y="5.5" width="4" height="4" fill="#fff6c8" stroke="#c98a12" stroke-width="1.2"/><path d="M6.5 5 L11 15 H2Z" fill="#5cbc6a" stroke="#13874a" stroke-width="1" stroke-linejoin="round"/><path d="M5.4 1.6 Q3 0.8 2.6 3.4 L1.8 9.5 M0.6 4.6 H4.6" stroke="#0a50ff" stroke-width="1.6" fill="none"/></svg></span><span class="tx" id="t76" style="left:140px;"><span style="letter-spacing:-0.385px">[VMM_M001_CKF001] </span><span style="letter-spacing:0.021px">Average </span><span style="letter-spacing:0.004px">delivery </span><span style="letter-spacing:-0.135px">costs</span></span></div>
</div>
<div class="sb"><span class="sbu"><svg viewBox="0 0 7 4"><path d="M0 4L3.5 0L7 4Z" fill="#333"/></svg></span><span class="sbt"></span><span class="sbd"><svg viewBox="0 0 7 4"><path d="M0 0L3.5 4L7 0Z" fill="#333"/></svg></span></div>
</div>
</div>
</body></html>
